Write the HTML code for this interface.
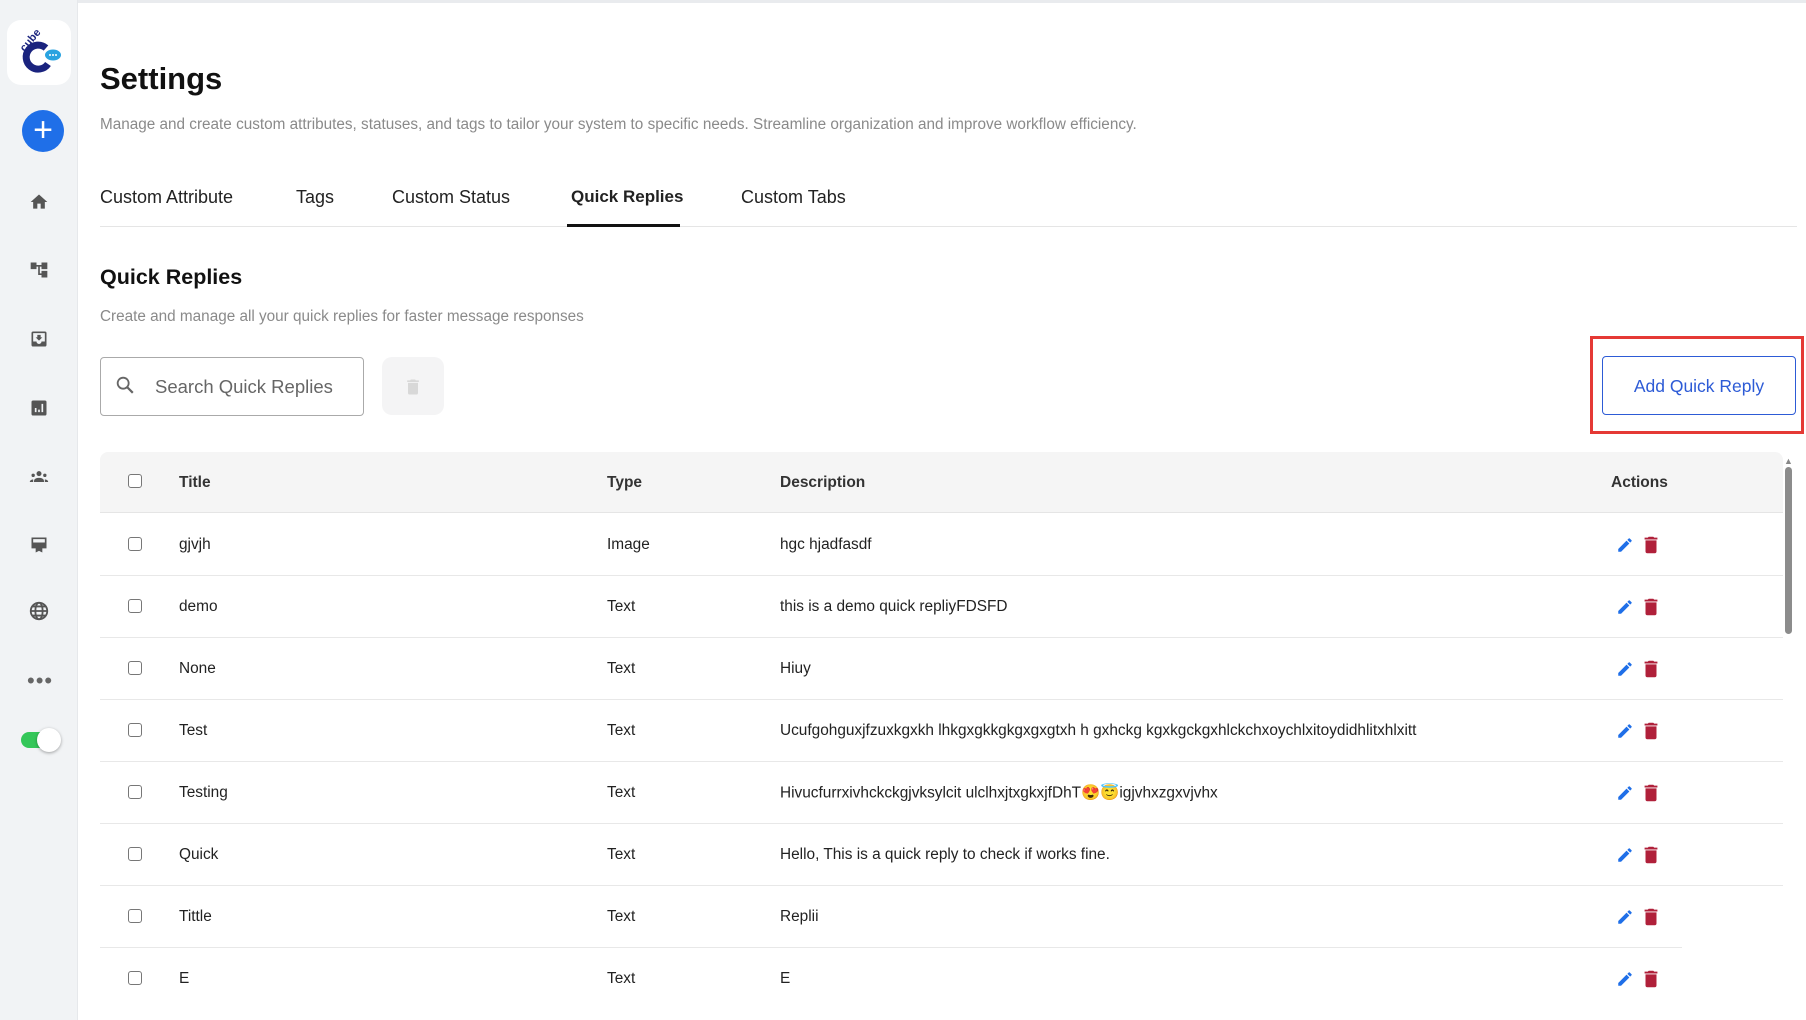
<!DOCTYPE html>
<html><head><meta charset="utf-8"><style>
*{margin:0;padding:0;box-sizing:border-box}
body{width:1806px;height:1020px;overflow:hidden;background:#fff;font-family:"Liberation Sans",Arial,sans-serif;color:#222;position:relative}
.a{position:absolute}
.side{left:0;top:0;width:78px;height:1020px;background:#f1f3f5;border-right:1px solid #e6e8eb}
.ic{position:absolute;left:29px;width:20px;height:20px}
.t{position:absolute;white-space:nowrap}
.row{position:absolute;left:100px;height:62px;border-bottom:1px solid #e8e8e8;font-size:15.4px}
.row span{position:absolute;top:50%;transform:translateY(-50%);white-space:nowrap}
.cb{position:absolute;left:28px;top:50%;margin-top:-8px;width:14px;height:14px;border:1.5px solid #777;border-radius:3px;background:#fff}
</style></head><body>
<div class="a" style="left:0;top:0;width:1806px;height:3px;background:#e9ebee"></div>
<div class="a side"></div>
<div class="a" style="left:7px;top:20px;width:64px;height:65px;background:#fff;border-radius:14px"></div>
<svg class="a" style="left:14px;top:26px" width="50" height="52" viewBox="0 0 50 52">
<text x="4" y="20" font-size="11" font-weight="bold" fill="#1a237e" transform="rotate(-50 14 16)" font-family="Liberation Sans">cube</text>
<path d="M32 22 A12 12 0 1 0 34 38" stroke="#1a237e" stroke-width="7" fill="none"/>
<ellipse cx="39" cy="29" rx="8" ry="5.5" fill="#29a3e0"/>
<circle cx="36" cy="29" r="1" fill="#fff"/><circle cx="39" cy="29" r="1" fill="#fff"/><circle cx="42" cy="29" r="1" fill="#fff"/>
</svg>
<div class="a" style="left:22px;top:110px;width:42px;height:42px;border-radius:50%;background:#1f6fe8;color:#fff;font-size:34px;line-height:40px;text-align:center">+</div>
<svg class="ic" style="top:192px" viewBox="0 0 24 24"><path d="M10 20v-6h4v6h5v-8h3L12 3 2 12h3v8z" fill="#555"/></svg>
<svg class="ic" style="top:260px" viewBox="0 0 24 24"><path d="M22 11V3h-7v3H9V3H2v8h7V8h2v10h4v3h7v-8h-7v3h-2V8h2v3z" fill="#555"/></svg>
<svg class="ic" style="top:329px" viewBox="0 0 24 24"><path d="M19 3H5a2 2 0 0 0-2 2v14a2 2 0 0 0 2 2h14a2 2 0 0 0 2-2V5a2 2 0 0 0-2-2zm0 12h-4a3 3 0 0 1-6 0H5V5h14zm-3-5h-2V7h-4v3H8l4 4z" fill="#555"/></svg>
<svg class="ic" style="top:398px" viewBox="0 0 24 24"><path d="M19 3H5a2 2 0 0 0-2 2v14a2 2 0 0 0 2 2h14a2 2 0 0 0 2-2V5a2 2 0 0 0-2-2zM9 17H7v-5h2zm4 0h-2v-3h2zm4 0h-2V7h2z" fill="#555"/></svg>
<svg class="ic" style="top:467px" viewBox="0 0 24 24"><circle cx="12" cy="8" r="3" fill="#555"/><circle cx="5" cy="10" r="2" fill="#555"/><circle cx="19" cy="10" r="2" fill="#555"/><path d="M6 17c0-3 3-4 6-4s6 1 6 4v1H6zM1 18c0-2 2-3 4-3v3zm22 0c0-2-2-3-4-3v3z" fill="#555"/></svg>
<svg class="ic" style="top:535px" viewBox="0 0 24 24"><path d="M3 3h18v13H3zM5 5v4h14V5zM8 16h8v5l-4-2-4 2z" fill="#555"/></svg>
<svg class="ic" style="top:600px;width:22px;height:22px;left:28px" viewBox="0 0 24 24"><circle cx="12" cy="12" r="9" stroke="#555" stroke-width="2" fill="none"/><ellipse cx="12" cy="12" rx="4" ry="9" stroke="#555" stroke-width="2" fill="none"/><path d="M3 12h18M5 7h14M5 17h14" stroke="#555" stroke-width="2"/></svg>
<div class="t" style="left:27px;top:668px;font-size:22px;color:#666;letter-spacing:1px">•••</div>
<div class="a" style="left:21px;top:732px;width:34px;height:16px;border-radius:8px;background:#34c759"></div>
<div class="a" style="left:37px;top:728px;width:24px;height:24px;border-radius:50%;background:#fff;box-shadow:0 1px 3px rgba(0,0,0,.35)"></div>

<div class="t" style="left:100px;top:61px;font-size:31px;font-weight:bold;color:#111">Settings</div>
<div class="t" style="left:100px;top:116px;font-size:15.3px;color:#8a8a8a">Manage and create custom attributes, statuses, and tags to tailor your system to specific needs. Streamline organization and improve workflow efficiency.</div>
<div class="t" style="left:100px;top:187px;font-size:18px">Custom Attribute</div>
<div class="t" style="left:296px;top:187px;font-size:18px">Tags</div>
<div class="t" style="left:392px;top:187px;font-size:18px">Custom Status</div>
<div class="t" style="left:571px;top:187px;font-size:17px;font-weight:bold">Quick Replies</div>
<div class="t" style="left:741px;top:187px;font-size:18px">Custom Tabs</div>
<div class="a" style="left:100px;top:226px;width:1697px;height:1px;background:#e5e5e5"></div>
<div class="a" style="left:567px;top:224px;width:113px;height:3px;background:#111"></div>

<div class="t" style="left:100px;top:265px;font-size:21.5px;font-weight:bold;color:#111">Quick Replies</div>
<div class="t" style="left:100px;top:308px;font-size:15.3px;color:#8a8a8a">Create and manage all your quick replies for faster message responses</div>

<div class="a" style="left:100px;top:357px;width:264px;height:59px;border:1px solid #aaa;border-radius:4px"></div>
<svg class="a" style="left:114px;top:374px" width="22" height="22" viewBox="0 0 24 24"><circle cx="10" cy="10" r="6" stroke="#666" stroke-width="2" fill="none"/><path d="M14.5 14.5l6 6" stroke="#666" stroke-width="2.4"/></svg>
<div class="t" style="left:155px;top:376px;font-size:18.5px;color:#666">Search Quick Replies</div>
<div class="a" style="left:382px;top:357px;width:62px;height:58px;background:#f4f4f5;border-radius:10px"></div>
<svg class="a" style="left:403px;top:376px" width="20" height="22" viewBox="0 0 24 24"><path d="M6 19a2 2 0 0 0 2 2h8a2 2 0 0 0 2-2V7H6zM19 4h-3.5l-1-1h-5l-1 1H5v2h14z" fill="#d8d8d8"/></svg>

<div class="a" style="left:1590px;top:336px;width:214px;height:98px;border:3px solid #e53935"></div>
<div class="a" style="left:1602px;top:356px;width:194px;height:59px;border:1.5px solid #2d5bd6;border-radius:4px;color:#2d5bd6;font-size:17.5px;text-align:center;line-height:58px">Add Quick Reply</div>

<div class="a" style="left:100px;top:452px;width:1683px;height:61px;background:#f5f5f5;border-radius:8px 8px 0 0;border-bottom:1px solid #e5e5e5"></div>
<div class="cb" style="left:128px;top:482px;position:absolute"></div>
<div class="t" style="left:179px;top:474px;font-size:15.5px;font-weight:bold;color:#333">Title</div>
<div class="t" style="left:607px;top:474px;font-size:15.5px;font-weight:bold;color:#333">Type</div>
<div class="t" style="left:780px;top:474px;font-size:15.5px;font-weight:bold;color:#333">Description</div>
<div class="t" style="left:1611px;top:474px;font-size:15.5px;font-weight:bold;color:#333">Actions</div>

<div id="rows"></div>
<div class="a" style="left:1784px;top:456px;width:10px;height:10px;color:#888;font-size:9px">▲</div>
<div class="a" style="left:1785px;top:467px;width:7px;height:167px;background:#8c8c8c;border-radius:4px"></div>
<script>
var d=[["gjvjh","Image","hgc hjadfasdf"],["demo","Text","this is a demo quick repliyFDSFD"],["None","Text","Hiuy"],["Test","Text","Ucufgohguxjfzuxkgxkh lhkgxgkkgkgxgxgtxh h gxhckg kgxkgckgxhlckchxoychlxitoydidhlitxhlxitt"],["Testing","Text","Hivucfurrxivhckckgjvksylcit ulclhxjtxgkxjfDhT😍😇igjvhxzgxvjvhx"],["Quick","Text","Hello, This is a quick reply to check if works fine."],["Tittle","Text","Replii"],["E","Text","E"]];
var h="";
d.forEach(function(r,i){var top=514+i*62;var w=i>=6?1582:1683;
h+='<div class="row" style="top:'+top+'px;width:'+w+'px'+(i==7?';border-bottom:none':'')+'"><div class="cb"></div><span style="left:79px">'+r[0]+'</span><span style="left:507px">'+r[1]+'</span><span style="left:680px">'+r[2]+'</span>'+
'<svg style="position:absolute;left:1516px;top:22px" width="18" height="18" viewBox="0 0 24 24"><path d="M3 17.25V21h3.75L17.8 9.94l-3.75-3.75zM20.7 7.04a1 1 0 0 0 0-1.41l-2.34-2.34a1 1 0 0 0-1.41 0l-1.83 1.83 3.75 3.75z" fill="#1f6fe8"/></svg>'+
'<svg style="position:absolute;left:1540px;top:18px" width="22" height="26" viewBox="0 0 24 24"><path d="M6 19a2 2 0 0 0 2 2h8a2 2 0 0 0 2-2V7H6zM19 4h-3.5l-1-1h-5l-1 1H5v2h14z" fill="#b0203a"/></svg></div>';});
document.getElementById("rows").innerHTML=h;
</script>
</body></html>
